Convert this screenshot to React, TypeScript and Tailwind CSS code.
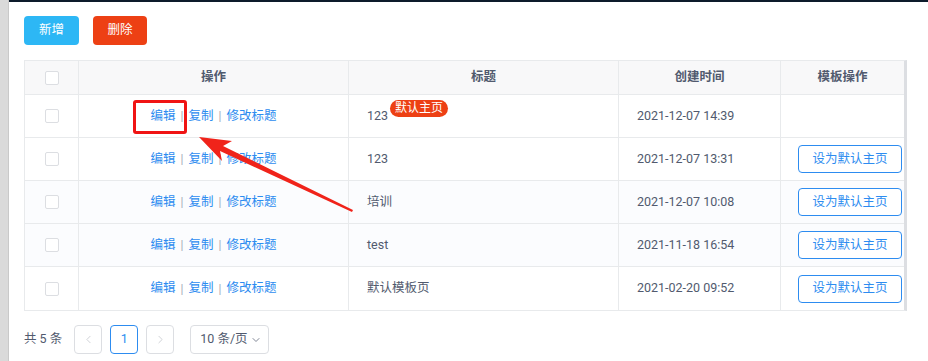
import { ChevronLeft, ChevronRight, ChevronDown } from "lucide-react";

const rows = [
  { title: "123", time: "2021-12-07 14:39", isDefault: true },
  { title: "123", time: "2021-12-07 13:31", isDefault: false },
  { title: "培训", time: "2021-12-07 10:08", isDefault: false },
  { title: "test", time: "2021-11-18 16:54", isDefault: false },
  { title: "默认模板页", time: "2021-02-20 09:52", isDefault: false },
];

const font = { fontFamily: "Roboto, 'Noto Sans CJK SC', sans-serif" };

function Checkbox() {
  return <span className="block w-[14px] h-[14px] rounded-[2px] border border-[#dcdee2] bg-white" />;
}

export default function App() {
  return (
    <div className="relative w-[928px] h-[361px] flex bg-white text-[#515a6e] text-[12.5px] overflow-hidden" style={font}>
      {/* left edge of the outer layout */}
      <div className="w-[9px] bg-[#dadada] border-r border-[#c9c9c9]" />

      <div className="flex-1 border-t-2 border-[#0d1b2b] pl-[15px] pt-[14px]">
        {/* Toolbar */}
        <div className="flex gap-[14px]">
          <button className="w-[55px] h-[29px] rounded-[4px] bg-[#2db7f5] text-white">新增</button>
          <button className="w-[54px] h-[29px] rounded-[4px] bg-[#ed4014] text-white">删除</button>
        </div>

        {/* Table */}
        <div className="mt-[15px] w-[883px] border border-[#e8eaec] border-r-[3px] border-r-[#dcdee2]">
          <div className="grid grid-cols-[54px_270px_270px_162px_1fr] h-[34px] bg-[#f8f8f9] font-semibold border-b border-[#e8eaec]">
            <div className="flex items-center justify-center border-r border-[#e8eaec]"><Checkbox /></div>
            <div className="flex items-center justify-center border-r border-[#e8eaec]">操作</div>
            <div className="flex items-center justify-center border-r border-[#e8eaec]">标题</div>
            <div className="flex items-center justify-center border-r border-[#e8eaec]">创建时间</div>
            <div className="flex items-center justify-center">模板操作</div>
          </div>

          {rows.map((r, i) => (
            <div
              key={i}
              className={`grid grid-cols-[54px_270px_270px_162px_1fr] h-[43px] ${i < rows.length - 1 ? "border-b border-[#e8eaec]" : ""} ${i === 2 || i === 3 ? "bg-[#fbfcfe]" : "bg-white"}`}
            >
              <div className="flex items-center justify-center border-r border-[#e8eaec]"><Checkbox /></div>
              <div className="flex items-center justify-center border-r border-[#e8eaec] text-[#2d8cf0]">
                <span>编辑</span>
                <span className="mx-[5px] text-[#a5acb8] text-[12px]">|</span>
                <span>复制</span>
                <span className="mx-[5px] text-[#a5acb8] text-[12px]">|</span>
                <span>修改标题</span>
              </div>
              <div className="flex items-center pl-[18px] border-r border-[#e8eaec]">
                <span>{r.title}</span>
                {r.isDefault && (
                  <span className="ml-[2px] -mt-[16px] h-[17px] px-[5px] rounded-full bg-[#ed4014] text-white text-[12px] leading-[17px]">默认主页</span>
                )}
              </div>
              <div className="flex items-center pl-[18px] border-r border-[#e8eaec]">{r.time}</div>
              <div className="flex items-center pl-[17px]">
                {!r.isDefault && (
                  <button className="w-[104px] h-[28px] rounded-[4px] border border-[#2d8cf0] text-[#2d8cf0] bg-white">设为默认主页</button>
                )}
              </div>
            </div>
          ))}
        </div>

        {/* Pagination */}
        <div className="mt-[14px] flex items-center">
          <span className="mr-[12px] text-[#515a6e]">共 5 条</span>
          <span className="w-[28px] h-[29px] flex items-center justify-center rounded-[4px] border border-[#dcdee2] text-[#c5c8ce]">
            <ChevronLeft size={13} strokeWidth={1.5} />
          </span>
          <span className="ml-[8px] w-[28px] h-[29px] flex items-center justify-center rounded-[4px] border border-[#2d8cf0] text-[#2d8cf0]">1</span>
          <span className="ml-[8px] w-[28px] h-[29px] flex items-center justify-center rounded-[4px] border border-[#dcdee2] text-[#c5c8ce]">
            <ChevronRight size={13} strokeWidth={1.5} />
          </span>
          <span className="ml-[16px] w-[79px] h-[29px] flex items-center pl-[9px] gap-[2px] rounded-[4px] border border-[#dcdee2] text-[#515a6e]">
            10 条/页
            <ChevronDown size={12} strokeWidth={2} className="text-[#808695]" />
          </span>
        </div>
      </div>

      {/* Annotation overlay */}
      <div className="absolute left-[133px] top-[100px] w-[54px] h-[34px] border-[3px] border-[#f01414] rounded-[3px]" />
      <svg className="absolute inset-0 pointer-events-none" width="928" height="361" viewBox="0 0 928 361">
        <polygon
          points="199,137 232,141 223,146 353,210 352,212 220,151 222,161"
          fill="#f0231a"
        />
      </svg>
    </div>
  );
}
